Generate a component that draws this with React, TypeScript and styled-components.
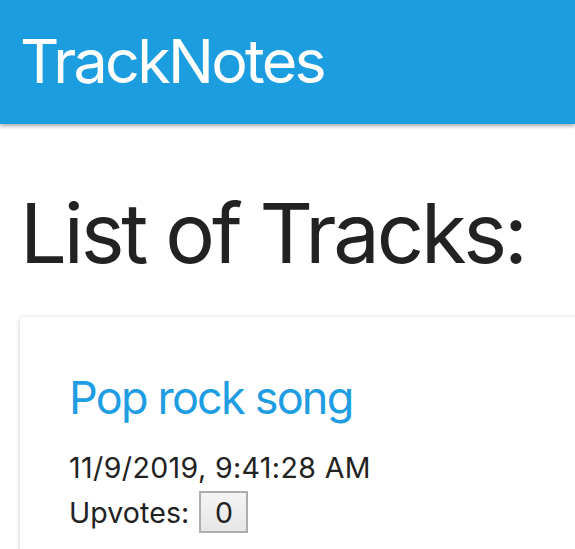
import React from "react";
import styled, { createGlobalStyle } from "styled-components";

const Global = createGlobalStyle`
  html, body {
    margin: 0;
    padding: 0;
    background: #ffffff;
    overflow-x: hidden;
  }
  body {
    font-family: Inter, Roboto, "Liberation Sans", sans-serif;
    color: #222222;
  }
`;

const Header = styled.header`
  height: 124px;
  background: #1c9de0;
  box-shadow: 0 2px 4px rgba(0, 0, 0, 0.35);
  padding: 30px 0 0 20px;
  box-sizing: border-box;
`;

const Brand = styled.div`
  color: #ffffff;
  font-size: 61px;
  line-height: 62px;
  letter-spacing: -2.7px;
`;

const Main = styled.main`
  padding: 0 20px;
`;

const Title = styled.h1`
  margin: 67px 0 42px;
  font-size: 83px;
  font-weight: 400;
  line-height: 84px;
  letter-spacing: -3.2px;
  color: #222222;
`;

const Card = styled.section`
  width: 640px;
  box-sizing: border-box;
  background: #ffffff;
  border-radius: 4px;
  box-shadow: 0 1px 5px rgba(0, 0, 0, 0.22);
  padding: 54px 49px 40px;
`;

const TrackLink = styled.a`
  display: block;
  color: #1e9de2;
  text-decoration: none;
  font-size: 45px;
  line-height: 54px;
  letter-spacing: -1.8px;
  margin-bottom: 23px;
`;

const Meta = styled.div`
  font-size: 28.5px;
  line-height: 40px;
  letter-spacing: 0.4px;
  color: #222222;
`;

const VoteRow = styled.div`
  display: flex;
  align-items: center;
  margin-top: 3px;
  font-size: 28.5px;
  letter-spacing: 0.1px;
  color: #222222;
  gap: 10px;
`;

const VoteButton = styled.button`
  width: 49px;
  height: 42px;
  box-sizing: border-box;
  border: 2px solid #adadad;
  border-radius: 0;
  background: linear-gradient(#f4f4f4, #e6e6e6);
  font-family: Inter, Roboto, "Liberation Sans", sans-serif;
  font-size: 28.5px;
  color: #222222;
  padding: 0;
`;

export default function App() {
  return (
    <>
      <Global />
      <Header>
        <Brand>TrackNotes</Brand>
      </Header>
      <Main>
        <Title>List of Tracks:</Title>
        <Card>
          <TrackLink href="#">Pop rock song</TrackLink>
          <Meta>11/9/2019, 9:41:28 AM</Meta>
          <VoteRow>
            <span>Upvotes:</span>
            <VoteButton>0</VoteButton>
          </VoteRow>
        </Card>
      </Main>
    </>
  );
}
